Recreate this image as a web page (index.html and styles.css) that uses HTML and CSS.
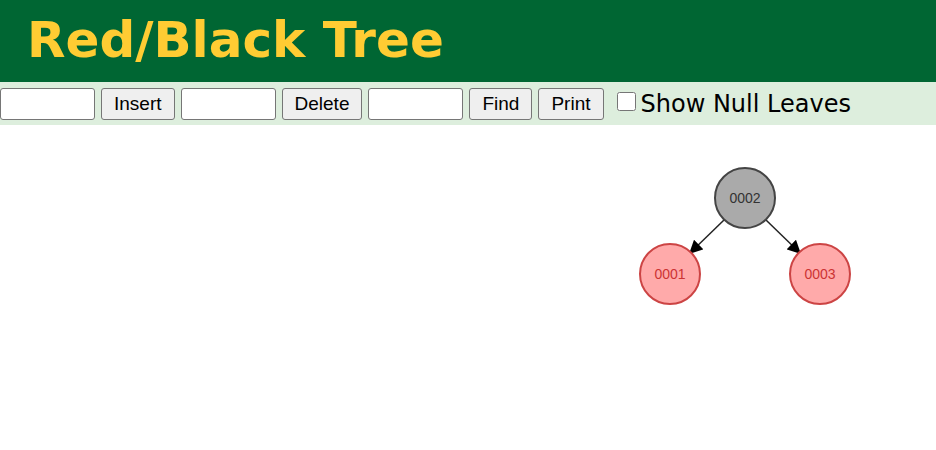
FILE: index.html
```html
<!DOCTYPE html>
<html lang="en">
<head>
    <meta charset="UTF-8">
    <meta name="viewport" content="width=device-width, initial-scale=1.0">
    <title>Red/Black Tree</title>
    <link rel="stylesheet" href="styles.css">
</head>
<body>

    <div class="header">
        <h1>Red/Black Tree</h1>
    </div>

    <div class="toolbar">
        <input type="text" id="insertValue">
        <button>Insert</button>
        <input type="text" id="deleteValue">
        <button>Delete</button>
        <input type="text" id="findValue">
        <button>Find</button>
        <button>Print</button>
        <label class="nullToggle"><input type="checkbox" id="showNull">Show Null Leaves</label>
    </div>

    <div class="canvas">
        <svg width="936" height="325" viewBox="0 0 936 325">
            <defs>
                <marker id="arrow" viewBox="0 0 10 10" refX="9" refY="5" markerWidth="9" markerHeight="9" orient="auto">
                    <path d="M0,0 L10,5 L0,10 z" fill="#000"/>
                </marker>
            </defs>
            <!-- edges -->
            <line class="edge" x1="724" y1="95" x2="690" y2="128" marker-end="url(#arrow)"/>
            <line class="edge" x1="766" y1="95" x2="800" y2="128" marker-end="url(#arrow)"/>
            <!-- nodes -->
            <g class="node black">
                <circle cx="745" cy="73" r="30"/>
                <text x="745" y="78">0002</text>
            </g>
            <g class="node red">
                <circle cx="670" cy="149" r="30"/>
                <text x="670" y="154">0001</text>
            </g>
            <g class="node red">
                <circle cx="820" cy="149" r="30"/>
                <text x="820" y="154">0003</text>
            </g>
        </svg>
    </div>

</body>
</html>
```

FILE: styles.css
```css
body {
    margin: 0;
    font-family: "DejaVu Sans", Verdana, sans-serif;
    background: #fff;
}

.header {
    background-color: #006633;
    height: 82px;
    padding-left: 27px;
}

.header h1 {
    margin: 0;
    color: #ffcc33;
    font-size: 50px;
    font-weight: bold;
    line-height: 80px;
}

.toolbar {
    display: flex;
    align-items: center;
    gap: 6px;
    height: 43px;
    background-color: #ddeedd;
}

.toolbar input[type="text"] {
    box-sizing: border-box;
    width: 95px;
    height: 32px;
    margin: 0;
    border: 1px solid #767676;
    border-radius: 3px;
    background: #fff;
    font-size: 16px;
}

.toolbar button {
    box-sizing: border-box;
    height: 32px;
    margin: 0;
    padding: 0 12px;
    font-family: "Liberation Sans", Arial, sans-serif;
    font-size: 19px;
    color: #000;
    background-color: #efefef;
    border: 1px solid #767676;
    border-radius: 3px;
}

.nullToggle {
    display: flex;
    align-items: center;
    margin-left: 7px;
    font-size: 24px;
    color: #000;
}

.nullToggle input {
    width: 19px;
    height: 19px;
    margin: 0 5px 4px 0;
}

.canvas svg {
    display: block;
}

.edge {
    stroke: #222;
    stroke-width: 1.5;
}

.node circle {
    stroke-width: 2;
}

.node text {
    font-family: "Liberation Sans", Arial, sans-serif;
    font-size: 14px;
    text-anchor: middle;
}

.black circle {
    fill: #aaaaaa;
    stroke: #444;
}

.black text {
    fill: #333;
}

.red circle {
    fill: #ffaaaa;
    stroke: #cc4444;
}

.red text {
    fill: #cc3333;
}
```
